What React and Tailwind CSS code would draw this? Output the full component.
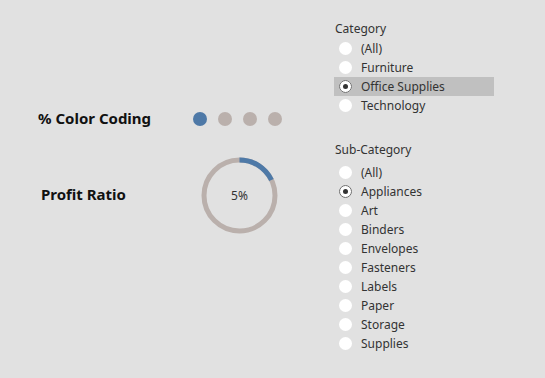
import React from "react";

const font = { fontFamily: '"Noto Sans", "Open Sans", sans-serif' };

function Radio({ checked }) {
  return (
    <span className="relative flex h-[13px] w-[13px] shrink-0 items-center justify-center rounded-full bg-white">
      {checked && (
        <>
          <span className="absolute inset-0 rounded-full border border-[#6b6b6b]" />
          <span className="h-[5px] w-[5px] rounded-full bg-[#333333]" />
        </>
      )}
    </span>
  );
}

function Row({ label, checked, highlight }) {
  return (
    <div
      className={
        "flex h-[19px] w-[160px] items-center gap-[9px] pl-[5px] text-[12px] text-[#333333] " +
        (highlight ? "bg-[#c0c0c0]" : "")
      }
    >
      <Radio checked={checked} />
      <span className="pt-[1px] leading-none">{label}</span>
    </div>
  );
}

export default function App() {
  const cat = ["(All)", "Furniture", "Office Supplies", "Technology"];
  const sub = ["(All)", "Appliances", "Art", "Binders", "Envelopes", "Fasteners", "Labels", "Paper", "Storage", "Supplies"];
  const r = 35.5;
  const c = 2 * Math.PI * r;
  const arc = (64 / 360) * c;
  return (
    <div className="flex h-[378px] w-[545px] bg-[#e1e1e1]" style={font}>
      <div className="w-[334px] shrink-0">
        <div className="mt-[107px] flex h-[22px] items-center">
          <span className="ml-[38px] w-[155px] text-[15px] font-bold leading-none text-[#111111]">% Color Coding</span>
          <div className="mt-[2px] flex gap-[11px]">
            <span className="h-[14px] w-[14px] rounded-full bg-[#4e79a7]" />
            <span className="h-[14px] w-[14px] rounded-full bg-[#bab0ac]" />
            <span className="h-[14px] w-[14px] rounded-full bg-[#bab0ac]" />
            <span className="h-[14px] w-[14px] rounded-full bg-[#bab0ac]" />
          </div>
        </div>
        <div className="mt-[28px] flex h-[77px] items-center">
          <span className="ml-[41px] mb-[2px] w-[160px] text-[15px] font-bold leading-none text-[#111111]">Profit Ratio</span>
          <div className="relative flex h-[77px] w-[77px] items-center justify-center">
            <svg width="77" height="77" viewBox="0 0 77 77" className="absolute inset-0">
              <circle cx="38.5" cy="38.5" r={r} fill="none" stroke="#bab0ac" strokeWidth="5" />
              <circle
                cx="38.5"
                cy="38.5"
                r={r}
                fill="none"
                stroke="#4e79a7"
                strokeWidth="5"
                strokeDasharray={`${arc} ${c}`}
                transform="rotate(-90 38.5 38.5)"
              />
            </svg>
            <span className="relative text-[12px] text-[#333333]">5%</span>
          </div>
        </div>
      </div>
      <div className="pt-[20px]">
        <div className="flex h-[19px] items-start text-[12px] text-[#333333]">
          <span className="pl-[1px]">Category</span>
        </div>
        {cat.map((l) => (
          <Row key={l} label={l} checked={l === "Office Supplies"} highlight={l === "Office Supplies"} />
        ))}
        <div className="mt-[26px] flex h-[22px] items-start text-[12px] text-[#333333]">
          <span className="pl-[1px]">Sub-Category</span>
        </div>
        {sub.map((l) => (
          <Row key={l} label={l} checked={l === "Appliances"} />
        ))}
      </div>
    </div>
  );
}
